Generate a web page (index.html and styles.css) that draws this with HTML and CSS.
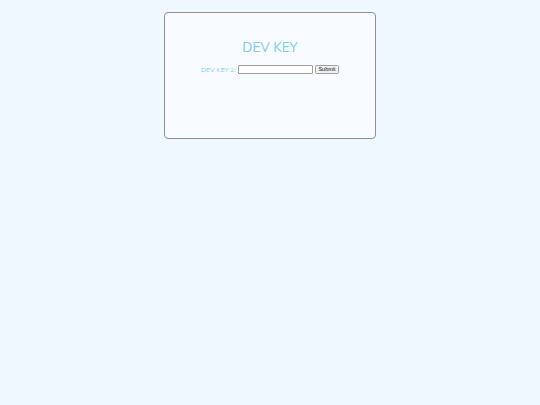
FILE: index.html
```html
<!DOCTYPE html>
<html>
<head>
<meta charset="utf-8">
<link rel="stylesheet" href="styles.css">
</head>
<body>
<div class="card">
  <h1 class="title">DEV KEY</h1>
  <form class="form">
    <label class="label" for="k">DEV KEY 2:</label>
    <input class="input" id="k" type="text">
    <button class="btn" type="button">Submit</button>
  </form>
</div>
</body>
</html>
```
FILE: styles.css
```css
html, body {
  margin: 0;
  padding: 0;
  background: #f0f8ff;
}
body {
  padding-top: 12px;
  font-family: "Nunito", "Lato", "Open Sans", sans-serif;
}
.card {
  box-sizing: border-box;
  width: 212px;
  height: 127px;
  margin: 0 auto;
  border: 1px solid #8f8f8f;
  border-radius: 4px;
  background: #f8fbff;
  padding-top: 27px;
  text-align: center;
}
.title {
  margin: 0;
  font-size: 13.5px;
  font-weight: 500;
  color: #87ceeb;
  line-height: 16px;
}
.form {
  margin-top: 8.5px;
  display: flex;
  justify-content: center;
  align-items: center;
  gap: 2px;
}
.label {
  font-size: 6.8px;
  color: #87ceeb;
}
.input {
  box-sizing: border-box;
  width: 75px;
  height: 9px;
  margin: 0;
  padding: 0;
  border: 1px solid #a0a0a0;
  border-radius: 1px;
  background: #fff;
}
.btn {
  box-sizing: border-box;
  width: 24px;
  height: 9px;
  margin: 0;
  padding: 0;
  border: 1px solid #a0a0a0;
  border-radius: 1.5px;
  background: #efefef;
  font-family: "Liberation Sans", Arial, sans-serif;
  font-size: 5.5px;
  color: #111;
  line-height: 7px;
}
```
